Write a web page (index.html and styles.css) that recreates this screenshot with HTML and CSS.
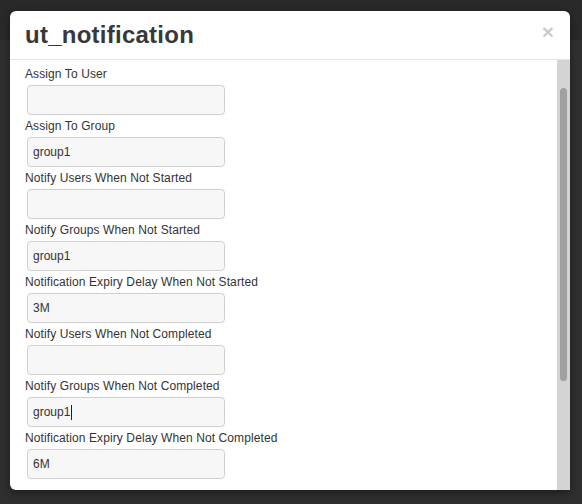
FILE: index.html
```html
<!DOCTYPE html>
<html>
<head>
<meta charset="utf-8">
<link rel="stylesheet" href="styles.css">
</head>
<body>
<div class="modal">
  <div class="modal-header">
    <h4 class="modal-title">ut_notification</h4>
    <span class="close">×</span>
  </div>
  <div class="modal-body">
    <div class="form">
      <div class="field"><label>Assign To User</label><div class="input"></div></div>
      <div class="field"><label>Assign To Group</label><div class="input">group1</div></div>
      <div class="field"><label>Notify Users When Not Started</label><div class="input"></div></div>
      <div class="field"><label>Notify Groups When Not Started</label><div class="input">group1</div></div>
      <div class="field"><label>Notification Expiry Delay When Not Started</label><div class="input">3M</div></div>
      <div class="field"><label>Notify Users When Not Completed</label><div class="input"></div></div>
      <div class="field"><label>Notify Groups When Not Completed</label><div class="input">group1<span class="caret"></span></div></div>
      <div class="field"><label>Notification Expiry Delay When Not Completed</label><div class="input">6M</div></div>
    </div>
    <div class="scrollbar"><div class="thumb"></div></div>
  </div>
</div>
</body>
</html>
```
FILE: styles.css
```css
html, body {
  margin: 0;
  padding: 0;
}
body {
  width: 582px;
  height: 504px;
  overflow: hidden;
  background: linear-gradient(#292929 0, #292929 40px, #2f2f2f 40px);
  font-family: "Liberation Sans", Arial, sans-serif;
  color: #333;
}
.modal {
  width: 560px;
  margin: 11px 0 0 10px;
  background: #fff;
  border-radius: 6px;
  box-shadow: 0 3px 9px rgba(0, 0, 0, 0.4);
}
.modal-header {
  box-sizing: border-box;
  height: 49px;
  padding: 10px 15px 0 15px;
  border-bottom: 1px solid #e5e5e5;
  display: flex;
  justify-content: space-between;
  align-items: flex-start;
}
.modal-title {
  margin: 0;
  font-size: 24px;
  font-weight: bold;
  line-height: 28px;
  letter-spacing: 0.25px;
  color: #383838;
}
.close {
  font-size: 21px;
  font-weight: bold;
  line-height: 1;
  color: #000;
  opacity: 0.2;
  margin-top: 0;
  margin-right: 1px;
}
.modal-body {
  height: 430px;
  display: flex;
}
.form {
  flex: 1;
  overflow: hidden;
  padding: 6px 15px 0 15px;
}
.field {
  margin-bottom: 3px;
}
.field label {
  display: block;
  font-size: 12px;
  line-height: 16px;
  letter-spacing: 0.1px;
  color: #333;
  margin-bottom: 3px;
}
.input {
  box-sizing: border-box;
  width: 198px;
  height: 30px;
  margin-left: 2px;
  border: 1px solid #cfcfcf;
  border-radius: 4px;
  background: #f7f7f7;
  padding: 0 5px;
  font-size: 12px;
  line-height: 28px;
  color: #333;
  display: flex;
  align-items: center;
}
.caret {
  display: inline-block;
  width: 1px;
  height: 15px;
  background: #222;
  margin-left: 1px;
}
.scrollbar {
  width: 13px;
  background: #d4d4d4;
  padding: 28px 0 0 3px;
  box-sizing: border-box;
}
.thumb {
  width: 7px;
  height: 293px;
  background: #a0a0a0;
  border-radius: 4px;
}
```
